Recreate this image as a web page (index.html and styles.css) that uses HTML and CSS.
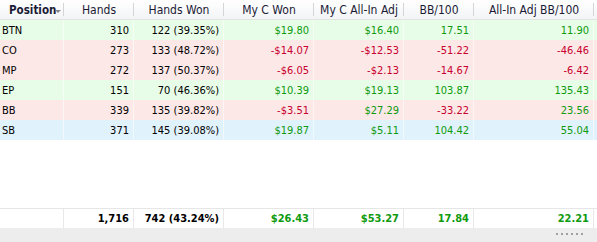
FILE: index.html
```html
<!DOCTYPE html>
<html>
<head>
<meta charset="utf-8">
<link rel="stylesheet" href="styles.css">
</head>
<body>
<div class="grid">
  <div class="row head">
    <div class="hc first"><span class="hl">Position</span><span class="sort"></span></div>
    <div class="hc">Hands</div>
    <div class="hc">Hands Won</div>
    <div class="hc">My C Won</div>
    <div class="hc">My C All-In Adj</div>
    <div class="hc">BB/100</div>
    <div class="hc">All-In Adj BB/100</div>
  </div>
  <div class="row g">
    <div class="c l">BTN</div><div class="c">310</div><div class="c">122 (39.35%)</div>
    <div class="c pos">$19.80</div><div class="c pos">$16.40</div><div class="c pos">17.51</div><div class="c pos">11.90</div>
  </div>
  <div class="row r">
    <div class="c l">CO</div><div class="c">273</div><div class="c">133 (48.72%)</div>
    <div class="c neg">-$14.07</div><div class="c neg">-$12.53</div><div class="c neg">-51.22</div><div class="c neg">-46.46</div>
  </div>
  <div class="row r">
    <div class="c l">MP</div><div class="c">272</div><div class="c">137 (50.37%)</div>
    <div class="c neg">-$6.05</div><div class="c neg">-$2.13</div><div class="c neg">-14.67</div><div class="c neg">-6.42</div>
  </div>
  <div class="row g">
    <div class="c l">EP</div><div class="c">151</div><div class="c">70 (46.36%)</div>
    <div class="c pos">$10.39</div><div class="c pos">$19.13</div><div class="c pos">103.87</div><div class="c pos">135.43</div>
  </div>
  <div class="row r">
    <div class="c l">BB</div><div class="c">339</div><div class="c">135 (39.82%)</div>
    <div class="c neg">-$3.51</div><div class="c pos">$27.29</div><div class="c neg">-33.22</div><div class="c pos">23.56</div>
  </div>
  <div class="row b">
    <div class="c l">SB</div><div class="c">371</div><div class="c">145 (39.08%)</div>
    <div class="c pos">$19.87</div><div class="c pos">$5.11</div><div class="c pos">104.42</div><div class="c pos">55.04</div>
  </div>
  <div class="filler"></div>
  <div class="row foot">
    <div class="c l"></div><div class="c">1,716</div><div class="c">742 (43.24%)</div>
    <div class="c pos">$26.43</div><div class="c pos">$53.27</div><div class="c pos">17.84</div><div class="c pos">22.21</div>
  </div>
  <div class="status"><span class="grip"></span></div>
</div>
</body>
</html>
```
FILE: styles.css
```css
html, body {
  margin: 0;
  padding: 0;
  background: #ffffff;
}
body {
  font-family: "DejaVu Sans Condensed", "DejaVu Sans", sans-serif;
  font-size: 11px;
  color: #000000;
}
.grid {
  width: 597px;
  height: 242px;
  display: flex;
  flex-direction: column;
  overflow: hidden;
}
.row {
  display: grid;
  grid-template-columns: 64px 70px 90px 90px 90px 70px 120px;
  height: 20px;
  flex: none;
}
.head {
  height: 19px;
  border-bottom: 1px solid #e3e3e3;
  background: linear-gradient(#ffffff, #f3f4f6);
  color: #1b1b36;
  font-size: 12px;
}
.hc {
  display: flex;
  align-items: center;
  justify-content: center;
  position: relative;
  white-space: nowrap;
}
.hc::after {
  content: "";
  position: absolute;
  right: 0;
  top: 3px;
  bottom: 3px;
  width: 1px;
  background: #d5d5d8;
}
.hc.first {
  justify-content: flex-start;
  padding-left: 9px;
  font-weight: bold;
  font-size: 11.5px;
}
.sort {
  width: 0;
  height: 0;
  border-left: 3px solid transparent;
  border-right: 3px solid transparent;
  border-top: 3px solid #8a8a8a;
  margin-left: -1px;
  margin-top: 3px;
}
.c {
  display: flex;
  align-items: center;
  justify-content: flex-end;
  padding-right: 4px;
  border-right: 1px solid rgba(255, 255, 255, 0.55);
  white-space: nowrap;
}
.c.l {
  justify-content: flex-start;
  padding-left: 2px;
  padding-right: 0;
}
.g { background: #e8fde8; }
.r { background: #fde8e8; }
.b { background: #e0f2fc; }
.pos { color: #0f9a0f; }
.neg { color: #c8002d; }
.filler {
  flex: 1;
}
.foot {
  height: 19px;
  border-top: 1px solid #e6e6e6;
  font-weight: bold;
}
.foot .c {
  border-right: 1px solid #e8e8e8;
}
.status {
  height: 14px;
  background: #ededed;
  position: relative;
  flex: none;
}
.grip {
  position: absolute;
  left: 556px;
  top: 5px;
  width: 27px;
  height: 2px;
  background: repeating-linear-gradient(90deg, #a0a0a0 0 2px, transparent 2px 5px);
}
```
